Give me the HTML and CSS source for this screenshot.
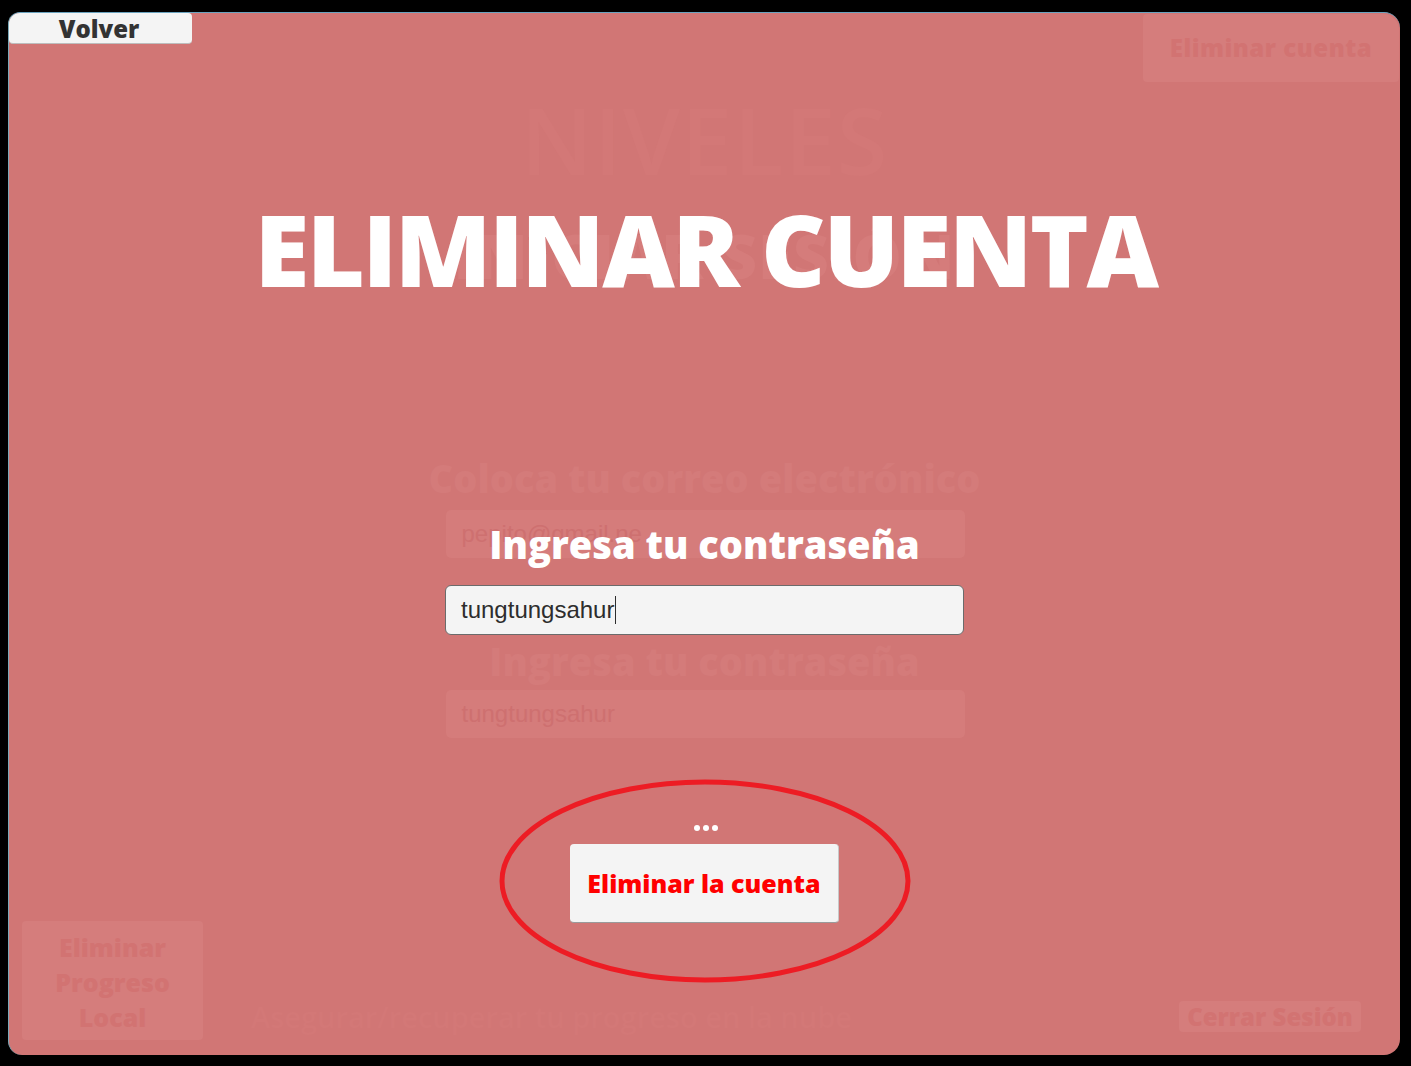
FILE: index.html
```html
<!DOCTYPE html>
<html lang="es">
<head>
<meta charset="utf-8">
<title>Eliminar cuenta</title>
<link rel="stylesheet" href="styles.css">
</head>
<body>
<div class="panel">
  <div class="bg-layer">
    <div class="bg-top">
      <div class="bg-btn bg-delete">Eliminar cuenta</div>
    </div>
    <div class="bg-levels">NIVELES</div>
    <div class="bg-login">INICIAR SESIÓN</div>
    <div class="bg-label bg-email-label">Coloca tu correo electrónico</div>
    <div class="bg-input bg-input-email">pepito@gmail.ne</div>
    <div class="bg-label bg-pass-label">Ingresa tu contraseña</div>
    <div class="bg-input bg-input-pass">tungtungsahur</div>
    <div class="bg-bottom">
      <div class="bg-btn bg-local">Eliminar<br>Progreso<br>Local</div>
      <div class="bg-note">Asegurar/recuperar tu progreso en la nube</div>
      <div class="bg-btn bg-logout">Cerrar Sesión</div>
    </div>
  </div>

  <div class="overlay">
    <div class="back">Volver</div>
    <h1 class="title">ELIMINAR CUENTA</h1>
    <div class="label">Ingresa tu contraseña</div>
    <div class="input">tungtungsahur<span class="caret"></span></div>
    <div class="dots"><span></span><span></span><span></span></div>
    <div class="confirm-wrap">
      <svg class="ring" width="414" height="208" viewBox="0 0 414 208">
        <ellipse cx="207" cy="104" rx="203" ry="99" fill="none" stroke="#ed1c24" stroke-width="5"/>
      </svg>
      <div class="confirm">Eliminar la cuenta</div>
    </div>
  </div>
</div>
</body>
</html>
```
FILE: styles.css
```css
html, body {
  margin: 0;
  padding: 0;
  background: #000;
  width: 1411px;
  height: 1066px;
  overflow: hidden;
}

.panel {
  position: relative;
  margin: 12px 11px 0 8px;
  width: 1392px;
  height: 1043px;
  border-radius: 12px 16px 16px 14px;
  background: #d17675;
  border-left: 1px solid #7aa9b8;
  border-top: 1px solid #6aa3bf;
  box-sizing: border-box;
  overflow: hidden;
  font-family: "Open Sans", "Liberation Sans", sans-serif;
}

/* ---------- faint background layer ---------- */
.bg-layer {
  display: flex;
  flex-direction: column;
  align-items: center;
  height: 100%;
}

.bg-top {
  align-self: stretch;
  display: flex;
  justify-content: flex-end;
  padding: 1px 1px 0 0;
}

.bg-btn {
  background: #d57d7c;
  color: #d27372;
  font-weight: 800;
  border-radius: 4px;
  text-align: center;
}

.bg-delete {
  width: 256px;
  height: 68px;
  line-height: 68px;
  font-size: 24px;
  border-top-right-radius: 16px;
  letter-spacing: 0.5px;
}

.bg-levels {
  margin-top: 8px;
  font-size: 92px;
  line-height: 100px;
  font-weight: 600;
  color: #d37877;
  letter-spacing: 1px;
}

.bg-login {
  margin-top: 30px;
  font-size: 62px;
  line-height: 70px;
  font-weight: 800;
  color: #d57c7b;
  letter-spacing: 1px;
}

.bg-label {
  font-size: 38px;
  font-weight: 800;
  color: #d47b7a;
  line-height: 50px;
}

.bg-email-label {
  margin-top: 163px;
}

.bg-pass-label {
  margin-top: 78px;
}

.bg-input {
  width: 519px;
  height: 48px;
  box-sizing: border-box;
  padding-left: 16px;
  background: #d57c7b;
  border-radius: 5px;
  color: #ce7070;
  font-family: "Liberation Sans", Arial, sans-serif;
  font-size: 24px;
  line-height: 48px;
  margin-left: 1px;
}

.bg-input-email {
  margin-top: 7px;
}

.bg-input-pass {
  margin-top: 4px;
}

.bg-bottom {
  align-self: stretch;
  margin-top: auto;
  display: flex;
  align-items: flex-end;
  padding: 0 39px 14px 13px;
}

.bg-local {
  width: 181px;
  height: 119px;
  box-sizing: border-box;
  padding-top: 9px;
  font-size: 25px;
  line-height: 35px;
  margin-bottom: 1px;
}

.bg-note {
  flex: 1;
  padding-left: 48px;
  color: #d37877;
  font-size: 29px;
  font-weight: 600;
  line-height: 40px;
  margin-bottom: 4px;
  white-space: nowrap;
  overflow: hidden;
}

.bg-logout {
  width: 182px;
  height: 31px;
  line-height: 31px;
  font-size: 24px;
  margin-bottom: 9px;
}

/* ---------- foreground overlay ---------- */
.overlay {
  position: absolute;
  inset: 0;
  display: flex;
  flex-direction: column;
  align-items: center;
}

.back {
  align-self: flex-start;
  width: 183px;
  height: 31px;
  box-sizing: border-box;
  background: #f4f4f4;
  border-radius: 8px 4px 4px 4px;
  border-bottom: 1px solid #bdbdbd;
  color: #333;
  font-weight: 800;
  font-size: 24px;
  line-height: 31px;
  text-align: center;
  padding-right: 3px;
}

.title {
  margin: 144px 0 0 2px;
  color: #fff;
  font-family: "Open Sans", sans-serif;
  font-weight: 800;
  font-size: 100px;
  line-height: 120px;
  letter-spacing: -2.5px;
}

.label {
  margin-top: 211px;
  color: #fff;
  font-weight: 800;
  font-size: 38px;
  line-height: 50px;
}

.input {
  margin-top: 16px;
  width: 519px;
  height: 50px;
  box-sizing: border-box;
  background: #f4f4f4;
  border: 1px solid #6b6b6b;
  border-radius: 6px;
  padding-left: 15px;
  color: #2d2d2d;
  font-family: "Liberation Sans", Arial, sans-serif;
  font-size: 24px;
  line-height: 48px;
  display: flex;
  align-items: center;
}

.caret {
  display: inline-block;
  width: 1px;
  height: 28px;
  background: #2d2d2d;
  margin-left: 1px;
}

.dots {
  margin-top: 190px;
  display: flex;
  gap: 3px;
  margin-left: 2px;
}

.dots span {
  width: 6px;
  height: 6px;
  border-radius: 50%;
  background: #fff;
}

.confirm-wrap {
  position: relative;
  margin-top: -54px;
  width: 414px;
  height: 208px;
  display: flex;
  align-items: center;
  justify-content: center;
}

.ring {
  position: absolute;
  left: 0;
  top: 0;
}

.confirm {
  position: relative;
  margin-top: 5px;
  width: 269px;
  height: 79px;
  box-sizing: border-box;
  background: #f4f4f4;
  border-radius: 4px;
  border-bottom: 1px solid #9a9a9a;
  border-right: 1px solid #c8c8c8;
  color: #ff0000;
  font-weight: 800;
  font-size: 25px;
  line-height: 79px;
  text-align: center;
}
```
